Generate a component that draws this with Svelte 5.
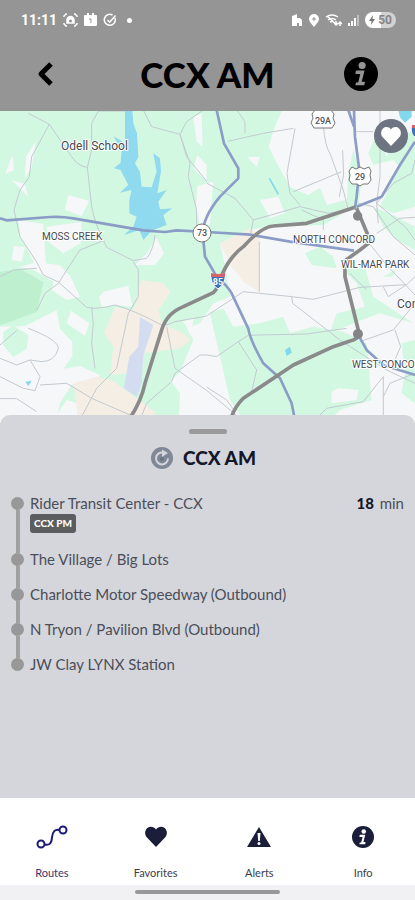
<script>
  const stops = [
    { name: "Rider Transit Center - CCX", minutes: 18, badge: "CCX PM" },
    { name: "The Village / Big Lots" },
    { name: "Charlotte Motor Speedway (Outbound)" },
    { name: "N Tryon / Pavilion Blvd (Outbound)" },
    { name: "JW Clay LYNX Station" },
  ];

  const tabs = [
    { id: "routes", label: "Routes" },
    { id: "favorites", label: "Favorites" },
    { id: "alerts", label: "Alerts" },
    { id: "info", label: "Info" },
  ];

  // Map shapes, drawn at three units per pixel
  const green = [
    "M0 0H846L821 60L806 110L836 170L871 232L925 255L960 234L981 285L1035 270L1045 300L971 345L800 352L740 360L660 400L676 470L690 560L640 580L600 640L560 655L580 690L540 786L512 812L540 850L536 930H0Z",
    "M1060 120L1085 200L1075 300L1040 290L1045 190Z",
    "M1245 60L1195 80L1160 140L1130 70L1105 130L1120 165L1180 150L1200 170L1140 290L1180 310L1245 290Z",
    "M1120 290L1190 320L1245 350V420L1190 390L1150 350Z",
    "M915 430L960 410L1000 440L1010 475L935 465Z",
    "M1095 470L1120 560L1180 600L1240 640L1140 610L1060 640L990 670L1010 610L1095 590L1070 520L1030 480Z",
    "M630 610L670 595L700 650L780 640L850 620L870 670L940 650L1030 665L1100 700L1115 870L1020 900L990 930H730L690 870Z",
    "M1205 700L1245 690V880L1205 850L1215 790Z",
    "M1150 500L1190 478L1175 500Z",
  ];

  const pale = [
    "M0 650L75 648L170 601L180 656L217 696V740L190 776L240 768L300 795L285 830L215 824L180 880L170 930H0Z",
    "M55 330L130 342L138 465H105L85 425L62 380Z",
    "M140 350L245 336L242 400L190 430L145 395Z",
    "M205 255L267 273L245 318L195 300Z",
    "M108 92L95 170L75 205L78 140Z",
    "M38 135L42 180L15 192Z",
    "M35 210L75 222L84 260L65 240Z",
    "M42 408L75 412L65 455L35 450Z",
    "M592 228L640 215L630 345L598 340L588 290Z",
    "M580 20L605 10L608 110L590 95Z",
    "M592 135L620 165V215L580 175Z",
    "M470 385L492 430L465 465H405L440 430Z",
    "M60 470L110 456L180 466L212 500L240 560L200 570L155 540L160 515L100 480Z",
    "M65 555L105 548L108 563L75 566Z",
    "M298 560L310 545L385 527L397 590L345 585L305 592Z",
    "M213 602L268 640L255 678L200 640Z",
    "M742 142L780 140L770 170Z",
    "M780 270L835 260L855 310L810 325Z",
    "M548 635L580 625L575 670Z",
    "M995 845L1015 835L1075 840L1070 870L995 880Z",
    "M200 870L230 880L240 930H160Z",
  ];

  const sand = [
    "M425 510L490 520L512 546L475 600L485 640L550 670L572 690L540 715L430 730L425 800L385 790L330 795L340 710L312 670L345 592L400 600Z",
    "M661 400L750 355L778 375V545L735 520L690 465Z",
    "M220 820L290 800L335 810L465 905L460 930H235Z",
  ];

  const water =
    "M375 0H397L400 40L411 70L415 140L405 160L420 185L425 230L455 232L470 185L460 130L480 145L483 185L472 250L500 240L475 275L480 298L517 295L490 315L500 345L455 362L430 390L418 360L372 375L400 350L410 320L388 310V270L395 240L360 248L385 225L362 180L342 175L362 158L365 120L340 78L375 100Z";

  const streets = [
    "M85 10L148 43L215 140Q235 170 262 172L275 290Q285 345 320 412L400 452L440 445Q460 420 465 375",
    "M148 43L95 140L88 200L60 240L42 300L60 380L110 456L130 495L175 516L260 592Q290 600 345 585Q400 600 485 645Q510 645 525 635L621 618",
    "M375 3H295L275 40V120L262 172",
    "M430 0L455 50L540 73L560 140L621 215",
    "M610 0L560 35L540 73L570 160L565 200L590 300V355",
    "M315 390L240 420L210 465L175 520L135 550L110 602",
    "M400 456L415 480V560L385 610L350 775L290 835L245 920",
    "M275 590L280 640L275 700L285 775",
    "M0 705L50 662",
    "M85 655Q175 690 175 715Q165 755 125 755L90 750L50 765L0 745",
    "M90 750L120 800L105 842L70 835L0 800",
    "M120 825L200 820L275 865L390 915",
    "M0 866H50L110 905",
    "M500 650L525 775L621 842L720 925",
    "M621 735H600L525 790L515 815L440 880L420 930",
    "M0 500L40 480L110 475",
    "M710 0L735 35V70M683 94L790 70L880 55",
    "M885 55L861 190L870 250L900 285",
    "M970 45Q975 110 990 130L1030 240L1045 300",
    "M880 245L1025 185M1028 120L1031 195L1018 260",
    "M621 220L705 265L760 330L900 290L985 310L1040 300",
    "M760 330L752 370M778 395V545",
    "M905 300L970 330V360",
    "M1070 65H1120M1140 0V200L1130 280L1215 350L1245 390",
    "M1245 150L1235 190L1180 220L1130 280L1135 340",
    "M1075 280L1120 290L1180 380L1245 435",
    "M1112 405L1160 465L1245 555",
    "M1245 322L1200 325L1130 370",
    "M621 617L730 545L875 560L940 568L1080 532L1220 524L1245 500",
    "M875 560L878 580L1020 690L1160 780L1245 820",
    "M621 735L650 740L715 695L745 676L920 672L1040 655",
    "M715 695L770 780L755 845",
    "M1050 490L1100 540",
    "M1150 530L1165 560L1220 524M1245 580L1180 660L1080 695",
    "M1185 660L1202 710L1180 760",
    "M1150 800L1090 875L980 895L945 930",
    "M1150 800V930M1245 790L1170 820L1150 860",
    "M621 832L680 870L705 905",
  ];

  const highways = [
    "M0 325L20 331L150 321Q185 319 220 325L430 361L495 366L530 361L621 366L750 374L870 395L1062 422",
    "M650 0L672 100L715 175V205L660 260Q610 320 608 370L615 440L650 500Q685 530 695 550L745 656Q750 690 790 760L840 805L875 880L885 930",
    "M1062 0L1065 80L1078 180L1070 260L1065 295",
    "M1045 0L1062 50",
    "M1245 95L1200 165L1145 260L1070 290",
    "M1078 680L1100 720L1150 765L1245 795",
  ];

  const busLine = [
    "M390 925Q425 870 435 820L485 660Q500 610 550 590L640 548Q655 535 668 490Q690 440 730 410Q785 350 820 348L920 340L1065 292",
    "M1070 295L1112 395L1080 420L1035 452V500L1078 672",
    "M1078 675Q1070 690 1050 693L1000 710L880 765L730 865Q705 890 695 920",
  ];

  let favorite = $state(false);
  let activeTab = $state("routes");
</script>

{#snippet infoIcon()}
  <svg viewBox="0 0 24 24" aria-hidden="true">
    <circle cx="12" cy="12" r="12" fill="currentColor" />
    <circle cx="12.800" cy="6" r="2.500" fill="var(--cut)" />
    <path d="M8.500 9.500h6l-2 8h2.300l-.5 2.500H8l.5-2h1.500L11.500 12H8z" fill="var(--cut)" />
  </svg>
{/snippet}

<div class="screen">
  <header>
    <div class="status">
      <div class="status-group">
        <span class="clock">11:11</span>
        <svg width="15" height="14" viewBox="0 0 15 14" fill="none" stroke="#fff" stroke-width="1.500">
          <path d="M1 4V3l2-2h1M11 1h1l2 2v1M14 10v1l-2 2h-1M4 13H3l-2-2v-1" />
          <path d="M4 10V7a3.500 3.500 0 0 1 7 0v3z" fill="#fff" />
          <circle cx="7.500" cy="8" r="1.500" fill="#959595" stroke="none" />
        </svg>
        <svg width="13" height="14" viewBox="0 0 13 14">
          <path d="M1 2h2V0h2v2h3V0h2v2h2q1 0 1 1v9q0 1-1 1H1q-1 0-1-1V3q0-1 1-1z" fill="#fff" />
          <path d="M5 6h2v4" fill="none" stroke="#959595" />
        </svg>
        <svg width="14" height="14" viewBox="0 0 14 14" fill="none" stroke="#fff" stroke-width="1.500">
          <path d="M12 5a5.500 5.500 0 1 1-2.500-3M4.500 7l2.200 2.200L12.500 2.500" />
        </svg>
        <span class="dot-more"></span>
      </div>
      <div class="status-group">
        <svg width="12" height="12" viewBox="0 0 12 12" fill="#fff">
          <path d="M1 12V2l5-2v4h3l2 2v6H8V9H6v3z" />
        </svg>
        <svg width="10" height="13" viewBox="0 0 10 13">
          <path d="M5 0a5 5 0 0 1 5 5c0 3-3 5-5 8C3 10 0 8 0 5a5 5 0 0 1 5-5z" fill="#fff" />
          <path d="M5 3v4M3 5h4" stroke="#959595" />
        </svg>
        <svg width="17" height="13" viewBox="0 0 17 13" fill="none" stroke="#fff" stroke-width="1.500">
          <path d="M1 3q6-4 12 0M3 6q4-3 8 0M5 8q2-1 4 0M2 2l10 9" />
          <path d="M11 7v4m-2-2 2 2 2-2M15 12V8m-2 2 2-2 2 2" />
        </svg>
        <svg width="11" height="11" viewBox="0 0 11 11" fill="#fff">
          <path d="M0 8h2v3H0zM3 6h2v5H3zM6 3h2v8H6z" />
          <path d="M9 0h2v11H9z" opacity=".4" />
        </svg>
        <span class="battery">
          <svg width="6" height="10" viewBox="0 0 6 10"><path d="M4 0 0 6h2.500L2 10l4-6H3.500z" fill="#777" /></svg>
          50
        </span>
      </div>
    </div>
    <div class="title-bar">
      <button class="icon-button" aria-label="Back">
        <svg width="16" height="24" viewBox="0 0 16 24" fill="none" stroke="#000" stroke-width="5">
          <path d="M14 2 4 12l10 10" stroke-linejoin="round" />
        </svg>
      </button>
      <h1>CCX AM</h1>
      <button class="icon-button about" aria-label="Route information">{@render infoIcon()}</button>
    </div>
  </header>

  <div class="map">
    <svg class="terrain" viewBox="0 0 415 312" preserveAspectRatio="xMidYMin slice" role="img" aria-label="Route map">
      <g transform="translate(0 -1) scale(.3333)">
        {#each green as d}<path {d} fill="#d2f8e2" />{/each}
        {#each pale as d}<path {d} fill="#f6f7f8" />{/each}
        <path d="M0 486L60 476L130 516L110 606L60 625L0 646Z" fill="#bef0d0" />
        <path d="M10 666L40 646L85 676L80 716L40 741L10 706Z" fill="#d2f8e2" />
        {#each sand as d}<path {d} fill="#f5eee4" />{/each}
        <path d="M420 621L460 645L430 735L425 820L410 860L372 835L388 740L415 710Z" fill="#d3dcf1" />
        <path d={water} fill="#8fdaee" />
        <path d="M1195 0H1235V20L1215 38L1200 22ZM855 720L870 710L875 728L860 738ZM76 815L95 812L85 828Z" fill="#83d8ee" />
        <path d="M808 205L835 253" stroke="#83d8ee" stroke-width="5" />
        <g fill="none" stroke-linejoin="round">
          {#each streets as d}<path {d} stroke="#c3cad0" stroke-width="3" />{/each}
          {#each highways as d}<path {d} stroke="#8b9dc6" stroke-width="8" />{/each}
          {#each busLine as d}<path {d} stroke="#8a8a8a" stroke-width="11" />{/each}
        </g>
        <circle cx="1073" cy="318" r="14" fill="#858585" />
        <circle cx="1074" cy="672" r="15" fill="#858585" />
      </g>

      <g class="place">
        <text class="town" x="61" y="39">Odell School</text>
        <text class="town" x="397" y="197">Concord</text>
        <text x="42" y="129">MOSS CREEK</text>
        <text x="293" y="132">NORTH CONCORD</text>
        <text x="341" y="157">WIL-MAR PARK</text>
        <text x="352" y="257">WEST CONCORD</text>
      </g>

      <g class="shield">
        <circle cx="202" cy="122" r="9" />
        <text x="202" y="125">73</text>
        <path d="M315-1h16l3 4-1 4 2 5-3 5h-18l-3-5 2-5-1-4z" />
        <text x="323" y="13">29A</text>
        <path d="M352 56l4 2 4-2 4 2 5-2 2 4-1 4 1 5-3 4h-5l-3 2-3-2h-5l-3-4 1-5-1-4z" />
        <text x="360" y="69">29</text>
      </g>
      <path d="M211 163q7 2 14 0 1 10-7 15-8-5-7-15z" fill="#3b70bd" stroke="#fff" />
      <path d="M211 162q7 2 14 0v4h-14z" fill="#d8646a" />
      <text class="interstate" x="218" y="174">85</text>
      <path d="M412 15h6v10h-4q-3-4-2-10z" fill="#3b70bd" />
      <path d="M412 14h6v3h-6z" fill="#d8646a" />
    </svg>
    <button class="favorite" aria-label="Favorite" aria-pressed={favorite} onclick={() => (favorite = !favorite)}>
      <svg width="20" height="19" viewBox="0 0 20 19">
        <path d="M10 19 1.500 10C-.5 7.500-.3 3.500 2 1.500 4.500-.7 8-.3 10 2.500 12-.3 15.500-.7 18 1.500c2.300 2 2.500 6 .5 8.500z" fill="#fff" />
      </svg>
    </button>
  </div>

  <main class="sheet">
    <div class="grabber"></div>
    <div class="sheet-title">
      <button class="refresh" aria-label="Refresh">
        <svg width="22" height="22" viewBox="0 0 22 22">
          <circle cx="11" cy="11" r="11" fill="#7f8896" />
          <path d="M12 5.500a6 6 0 1 0 5 6" fill="none" stroke="#d5d6db" stroke-width="2" />
          <path d="M11 2.500l6 3.500-6 4z" fill="#d5d6db" />
          <circle cx="11" cy="12" r="2" fill="#6b7482" />
        </svg>
      </button>
      <h2>CCX AM</h2>
    </div>

    <ol class="stops">
      {#each stops as stop}
        <li>
          <div class="marker"></div>
          <div class="stop">
            <span class="name">{stop.name}</span>
            {#if stop.badge}<span class="badge">{stop.badge}</span>{/if}
          </div>
          {#if stop.minutes}
            <span class="eta"><strong>{stop.minutes}</strong> min</span>
          {/if}
        </li>
      {/each}
    </ol>
  </main>

  <nav>
    {#each tabs as tab}
      <button class="tab" class:active={activeTab === tab.id} onclick={() => (activeTab = tab.id)}>
        <span class="tab-icon">
          {#if tab.id === "routes"}
            <svg class="wide" viewBox="0 0 32 24" fill="none" stroke="currentColor" stroke-width="2">
              <circle cx="5" cy="19" r="3.500" />
              <circle cx="27" cy="5" r="3.500" />
              <path d="M8.500 19.500c5 1 7-1 7.500-7s3-8.500 7.500-7.500" />
            </svg>
          {:else if tab.id === "favorites"}
            <svg viewBox="0 0 22 22">
              <path d="M11 21 1.500 11C-.5 8.500-.3 4 2.300 2 5 0 9 .5 11 3.500 13 .5 17 0 19.700 2c2.600 2 2.800 6.500.8 9z" fill="currentColor" />
            </svg>
          {:else if tab.id === "alerts"}
            <svg class="alert" viewBox="0 0 24 20">
              <path d="M12 0 24 20H0z" fill="currentColor" />
              <path d="M10.500 6h3l-.7 8h-1.600z" fill="#fff" />
              <circle cx="12" cy="16.500" r="1.500" fill="#fff" />
            </svg>
          {:else}
            {@render infoIcon()}
          {/if}
        </span>
        {tab.label}
      </button>
    {/each}
  </nav>
  <div class="home-bar"><span></span></div>
</div>

<style>
  :global(body) {
    margin: 0;
  }
  .screen {
    min-height: 100vh;
    display: flex;
    flex-direction: column;
    background: #d5d6db;
    font-family: Lato, "Liberation Sans", sans-serif;
    color: #4a4e5a;
  }
  button {
    padding: 0;
    border: none;
    background: none;
    font: inherit;
    color: inherit;
    cursor: pointer;
  }
  svg {
    display: block;
  }
  h1,
  h2 {
    margin: 0;
    font-weight: 900;
  }

  header {
    background: #959595;
    color: #000;
  }
  .status {
    display: flex;
    justify-content: space-between;
    height: 40px;
    padding: 0 19px 0 21px;
    color: #fff;
  }
  .status-group {
    display: flex;
    align-items: center;
    gap: 6px;
  }
  .clock {
    font: bold 14px Roboto, sans-serif;
  }
  .dot-more {
    width: 5px;
    height: 5px;
    margin-left: 4px;
    border-radius: 50%;
    background: #fff;
  }
  .battery {
    display: flex;
    align-items: center;
    gap: 3px;
    height: 16px;
    padding: 0 4px;
    border-radius: 8px;
    background: linear-gradient(90deg, #fff 50%, #d2d2d2 50%);
    font: bold 12px Roboto, sans-serif;
    color: #858585;
  }
  .title-bar {
    display: flex;
    align-items: center;
    justify-content: space-between;
    height: 71px;
    padding: 0 37px 4px;
    box-sizing: border-box;
  }
  .title-bar h1 {
    font-size: 35px;
    line-height: 40px;
  }
  .icon-button {
    width: 34px;
  }
  .about {
    --cut: #959595;
  }
  .about svg {
    width: 34px;
    height: 34px;
  }

  .map {
    position: relative;
    background: #f6f7f8;
  }
  .terrain {
    width: 100%;
    height: 312px;
  }
  .place text {
    font: 10px Roboto, sans-serif;
    fill: #45494f;
    stroke: #fff;
    stroke-width: 2px;
    paint-order: stroke;
  }
  .place .town {
    font-size: 12px;
  }
  .shield circle,
  .shield path {
    fill: #fff;
    stroke: #777;
  }
  .shield text,
  .interstate {
    font: 500 9px Roboto, sans-serif;
    fill: #555;
    text-anchor: middle;
  }
  .interstate {
    font-weight: bold;
    fill: #fff;
  }
  .favorite {
    position: absolute;
    top: 8px;
    right: 7px;
    display: flex;
    align-items: center;
    justify-content: center;
    width: 34px;
    height: 34px;
    border-radius: 50%;
    background: #6e7481;
  }

  .sheet {
    position: relative;
    flex: 1;
    margin-top: -8px;
    padding: 14px 11px 20px;
    border-radius: 10px 10px 0 0;
    background: #d5d6db;
  }
  .grabber {
    width: 38px;
    height: 5px;
    margin: 0 auto;
    border-radius: 3px;
    background: #9a9a9d;
  }
  .sheet-title {
    display: flex;
    align-items: center;
    justify-content: center;
    gap: 10px;
    height: 24px;
    margin-top: 12px;
    padding-right: 8px;
    color: #14162a;
  }
  .sheet-title h2 {
    font-size: 19px;
    line-height: 24px;
  }
  .stops {
    margin: 27px 0 0;
    padding: 0;
    list-style: none;
  }
  .stops li {
    display: flex;
    min-height: 35px;
    font-size: 15px;
    line-height: 12px;
  }
  .marker {
    display: flex;
    flex-direction: column;
    align-items: center;
    width: 13px;
    margin-right: 6px;
  }
  .marker::before {
    content: "";
    width: 13px;
    height: 13px;
    border-radius: 50%;
    background: #989899;
  }
  .marker::after {
    content: "";
    flex: 1;
    width: 4px;
    background: #a0a0a1;
  }
  .stops li:last-child .marker::after {
    display: none;
  }
  .stop {
    display: flex;
    flex: 1;
    flex-direction: column;
    align-items: flex-start;
  }
  .badge {
    margin: 5px 0 20px;
    padding: 0 4px;
    border-radius: 3px;
    background: #5c5d5f;
    color: #fff;
    font-size: 10px;
    font-weight: 900;
    line-height: 19px;
  }
  .eta strong {
    margin-right: 2px;
    font-weight: 900;
    color: #14162a;
  }

  nav {
    display: flex;
    height: 87px;
    background: #fff;
  }
  .tab {
    --cut: #fff;
    display: flex;
    flex: 1;
    flex-direction: column;
    align-items: center;
    gap: 16px;
    padding-top: 27px;
    font-size: 11px;
    line-height: 16px;
    color: #3a3d49;
  }
  .tab.active {
    color: #34386f;
  }
  .tab-icon {
    display: flex;
    align-items: center;
    height: 24px;
    color: #1b1e38;
  }
  .tab.active .tab-icon {
    color: #1c1a78;
  }
  .tab-icon svg {
    width: 22px;
    height: 22px;
  }
  .tab-icon .wide {
    width: 32px;
    height: 24px;
  }
  .tab-icon .alert {
    width: 24px;
    height: 20px;
  }
  .home-bar {
    display: flex;
    justify-content: center;
    height: 15px;
    background: #f1f1f3;
  }
  .home-bar span {
    width: 35%;
    height: 4px;
    margin-top: 5px;
    border-radius: 2px;
    background: #98989a;
  }
</style>
